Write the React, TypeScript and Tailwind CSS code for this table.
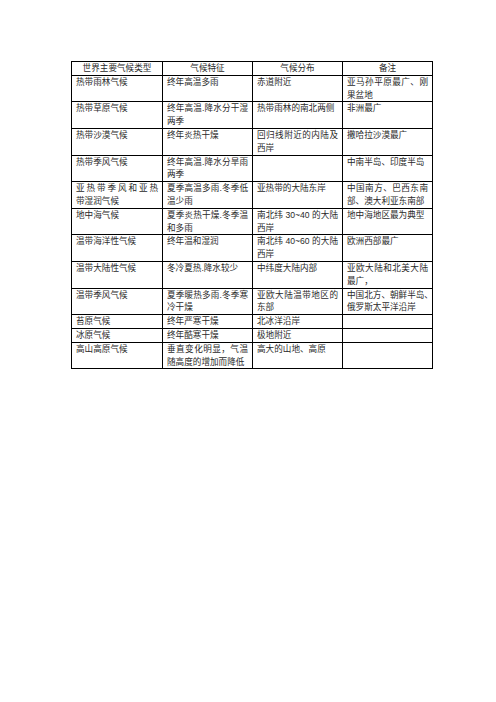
import React from "react";

// 每行数据：各单元格按行拆开，方便控制换行和两端对齐
type Cell = string[];

const header = ["世界主要气候类型", "气候特征", "气候分布", "备注"];

const rows: Cell[][] = [
  [["热带雨林气候"], ["终年高温多雨"], ["赤道附近"], ["亚马孙平原最广、刚", "果盆地"]],
  [["热带草原气候"], ["终年高温.降水分干湿", "两季"], ["热带雨林的南北两侧"], ["非洲最广"]],
  [["热带沙漠气候"], ["终年炎热干燥"], ["回归线附近的内陆及", "西岸"], ["撒哈拉沙漠最广"]],
  [["热带季风气候"], ["终年高温.降水分旱雨", "两季"], [], ["中南半岛、印度半岛"]],
  [
    ["亚热带季风和亚热", "带湿润气候"],
    ["夏季高温多雨.冬季低", "温少雨"],
    ["亚热带的大陆东岸"],
    ["中国南方、巴西东南", "部、澳大利亚东南部"],
  ],
  [["地中海气候"], ["夏季炎热干燥.冬季温", "和多雨"], ["南北纬 30~40 的大陆", "西岸"], ["地中海地区最为典型"]],
  [["温带海洋性气候"], ["终年温和湿润"], ["南北纬 40~60 的大陆", "西岸"], ["欧洲西部最广"]],
  [["温带大陆性气候"], ["冬冷夏热.降水较少"], ["中纬度大陆内部"], ["亚欧大陆和北美大陆", "最广，"]],
  [
    ["温带季风气候"],
    ["夏季暖热多雨.冬季寒", "冷干燥"],
    ["亚欧大陆温带地区的", "东部"],
    ["中国北方、朝鲜半岛、", "俄罗斯太平洋沿岸"],
  ],
  [["苔原气候"], ["终年严寒干燥"], ["北冰洋沿岸"], []],
  [["冰原气候"], ["终年酷寒干燥"], ["极地附近"], []],
  [["高山高原气候"], ["垂直变化明显，气温", "随高度的增加而降低"], ["高大的山地、高原"], []],
];

const CellText = ({ lines }: { lines: Cell }) => (
  <>
    {lines.map((line, i) => (
      <div
        key={i}
        className={`whitespace-nowrap ${i < lines.length - 1 ? "text-justify [text-align-last:justify]" : "text-left"}`}
      >
        {line}
      </div>
    ))}
  </>
);

export default function App() {
  return (
    <div
      className="min-h-[702px] bg-white pl-[71px] pt-[61px] text-[#2a2a2a]"
      style={{ fontFamily: '"Liberation Sans", "Noto Sans CJK SC", sans-serif' }}
      lang="zh-CN"
    >
      <table className="w-[361px] table-fixed border-collapse text-[8.6px] leading-[12.8px]">
        <colgroup>
          <col className="w-[91px]" />
          <col className="w-[90px]" />
          <col className="w-[90px]" />
          <col className="w-[90px]" />
        </colgroup>
        <thead>
          <tr>
            {header.map((h) => (
              <th key={h} className="border border-black px-[4px] py-0 text-center font-normal">
                {h}
              </th>
            ))}
          </tr>
        </thead>
        <tbody>
          {rows.map((row, r) => (
            <tr key={r}>
              {row.map((cell, c) => (
                <td key={c} className="border border-black px-[4px] py-0 align-top">
                  {cell.length > 0 ? <CellText lines={cell} /> : <div>&nbsp;</div>}
                </td>
              ))}
            </tr>
          ))}
        </tbody>
      </table>
    </div>
  );
}
